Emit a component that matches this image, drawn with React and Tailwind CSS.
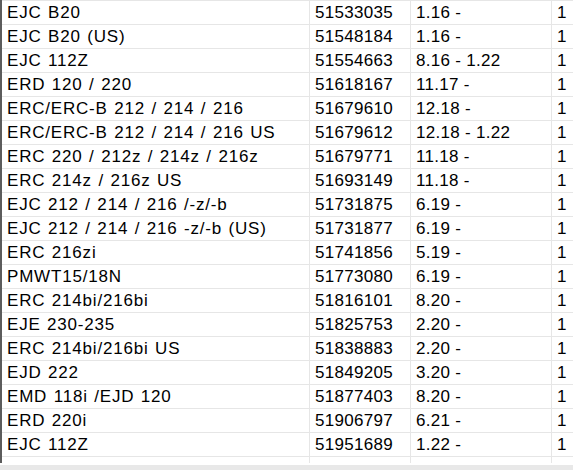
const rows = [
  ['EJC B20', '51533035', '1.16 -', '1'],
  ['EJC B20 (US)', '51548184', '1.16 -', '1'],
  ['EJC 112Z', '51554663', '8.16 - 1.22', '1'],
  ['ERD 120 / 220', '51618167', '11.17 -', '1'],
  ['ERC/ERC-B 212 / 214 / 216', '51679610', '12.18 -', '1'],
  ['ERC/ERC-B 212 / 214 / 216 US', '51679612', '12.18 - 1.22', '1'],
  ['ERC 220 / 212z / 214z / 216z', '51679771', '11.18 -', '1'],
  ['ERC 214z / 216z US', '51693149', '11.18 -', '1'],
  ['EJC 212 / 214 / 216 /-z/-b', '51731875', '6.19 -', '1'],
  ['EJC 212 / 214 / 216 -z/-b (US)', '51731877', '6.19 -', '1'],
  ['ERC 216zi', '51741856', '5.19 -', '1'],
  ['PMWT15/18N', '51773080', '6.19 -', '1'],
  ['ERC 214bi/216bi', '51816101', '8.20 -', '1'],
  ['EJE 230-235', '51825753', '2.20 -', '1'],
  ['ERC 214bi/216bi US', '51838883', '2.20 -', '1'],
  ['EJD 222', '51849205', '3.20 -', '1'],
  ['EMD 118i /EJD 120', '51877403', '8.20 -', '1'],
  ['ERD 220i', '51906797', '6.21 -', '1'],
  ['EJC 112Z', '51951689', '1.22 -', '1'],
]

const cols = 'grid grid-cols-[307px_101px_141px_1fr]'

function Row({ cells }) {
  return (
    <div className={`${cols} h-6 border-b border-[#e6e6e6]`}>
      {cells.map((c, i) => (
        <div
          key={i}
          className={`flex items-center whitespace-nowrap overflow-hidden ${i === 0 ? 'pl-[5px] tracking-[0.8px] [word-spacing:1px]' : 'pl-[5px] tracking-[0.3px] border-l border-[#e6e6e6]'}`}
        >
          {c}
        </div>
      ))}
    </div>
  )
}

export default function App() {
  return (
    <div className="flex h-[470px] w-[573px] flex-col overflow-hidden bg-white text-[17px] leading-none text-black font-['Liberation_Sans',Arial,sans-serif]">
      {/* table body */}
      <div className="flex h-[463px] flex-col border-l-2 border-[#5c5c5c]">
        <div className="border-t border-[#e6e6e6]">
          {rows.map((r, i) => (
            <Row key={i} cells={r} />
          ))}
        </div>
        {/* empty trailing row */}
        <div className={`${cols} flex-1`}>
          <div />
          <div className="border-l border-[#e6e6e6]" />
          <div className="border-l border-[#e6e6e6]" />
          <div className="border-l border-[#e6e6e6]" />
        </div>
      </div>
      <div className="h-[2px] bg-white" />
      <div className="flex-1 bg-[#e8e8e8]" />
    </div>
  )
}
